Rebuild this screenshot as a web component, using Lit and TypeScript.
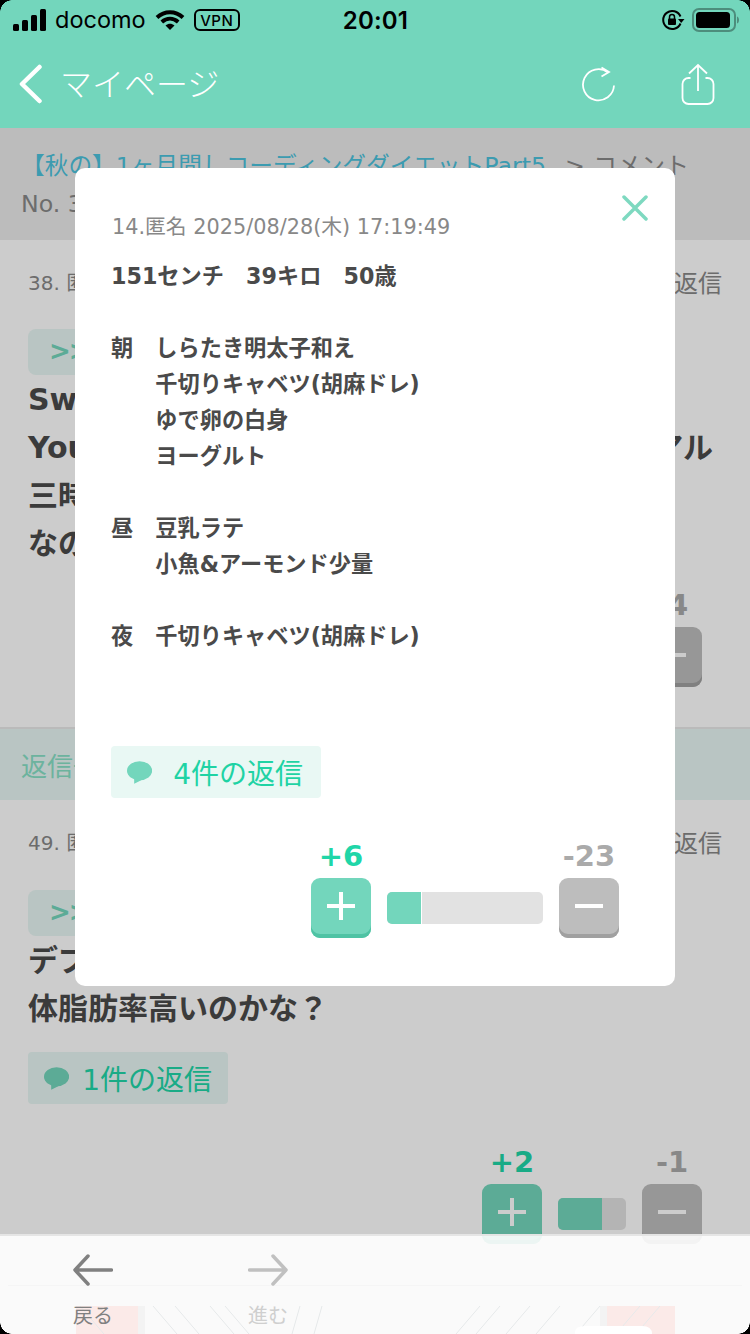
import { LitElement, html, css, svg } from "lit";
import { customElement } from "lit/decorators.js";

const score = (plus: string, minus: string, barW: number, fill: number) => html`
  <div class="score">
    <div class="count up">${plus}</div><div></div><div class="count down">${minus}</div>
    <div class="btn p"><svg width="28" height="28" viewBox="0 0 28 28"><path d="M0 14H28M14 0V28" stroke="#fff" stroke-width="4"/></svg></div>
    <div class="bar" style="width:${barW}px"><i style="width:${fill}px"></i></div>
    <div class="btn m"><svg width="28" height="28" viewBox="0 0 28 28"><path d="M0 14H28" stroke="#fff" stroke-width="4"/></svg></div>
  </div>`;

const bubble = html`<svg class="bubble" width="28" height="25" viewBox="0 0 28 25"><ellipse cx="14" cy="10.5" rx="14" ry="10.5" fill="#73d6bc"/><path d="M8 18V25L18 20Z" fill="#73d6bc"/></svg>`;

const lines = (angle: number, xs: number[]) =>
  xs.map((x) => svg`<path d="M${x} 0L${x + angle} 28" stroke="#e6e9ea" stroke-width="1" fill="none"/>`);

@customElement("app-root")
export class AppRoot extends LitElement {
  static styles = css`
    :host { display: block; width: 750px; height: 1334px; }
    * { box-sizing: border-box; }
    .screen { position: relative; width: 750px; height: 1334px; overflow: hidden; background: #fff;
      font-family: "DejaVu Sans", "Noto Sans CJK JP", sans-serif; color: #4a4a4a; }
    .top { background: #73d6bc; height: 128px; display: flex; flex-direction: column; }
    .status { height: 40px; display: grid; grid-template-columns: 1fr auto 1fr; align-items: center; color: #000;
      font-family: Inter, "Liberation Sans", sans-serif; }
    .st-l { display: flex; align-items: center; padding-left: 13px; }
    .carrier { font-size: 23.5px; margin: 0 9px 0 9px; line-height: 40px; }
    .vpn { border: 2px solid #000; border-radius: 6px; width: 46px; height: 22px; font-size: 15px; font-weight: 500; letter-spacing: .5px;
      display: flex; align-items: center; justify-content: center; margin-left: 9px; }
    .time { font-size: 24px; font-weight: 600; letter-spacing: .2px; margin-left: 1px; }
    .st-r { display: flex; justify-content: flex-end; align-items: center; gap: 7px; padding-right: 11px; }
    .nav { flex: 1; display: flex; align-items: center; padding: 0 35px 0 18px; color: #fff; }
    .nav .ttl { font-family: "Noto Sans CJK JP", sans-serif; font-weight: 300; font-size: 32px; margin-left: 16px; flex: 1; line-height: 36px; padding-bottom: 4px; }
    .nav .refresh { margin-right: 65px; }
    .crumb { background: #ececec; height: 112px; padding: 19px 21px 0; font-size: 23.7px; line-height: 38px; color: #888; white-space: nowrap; overflow: hidden; }
    .crumb a { color: #4cc2dc; }
    .crumb .sep { margin: 0 8px 0 19px; }
    .crumb .cm { font-size: 24px; }
    .post { padding: 23px 28px 0; position: relative; }
    .p1 { height: 489px; border-bottom: 2px solid #e9e9e9; }
    .p2 { height: 434px; }
    .head { display: flex; justify-content: space-between; align-items: center; height: 36px; font-size: 20px; color: #888; }
    .head span:last-child { font-size: 24px; }
    .anchor { margin-top: 30px; width: 200px; height: 46px; padding: 0 21px; border-radius: 8px; background: #e8f7f4; color: #73d6bc; font-weight: bold; font-size: 26px; letter-spacing: -2px; line-height: 44px; }
    .p2 .anchor { margin-top: 31px; }
    .text { font-weight: bold; font-size: 30px; line-height: 48px; white-space: pre; margin: 1px 0 0; word-spacing: 2px; }
    .replyband { height: 71px; background: #e8f7f4; color: #87e0c6; font-size: 26px; padding: 0 21px; line-height: 76px; }
    .chip { display: flex; align-items: center; background: #e8f7f4; color: #20d6a8; font-size: 28px; height: 52px; border-radius: 4px; white-space: nowrap; }
    .p2 .chip { margin-top: 19px; padding: 0 16px; gap: 13px; width: 200px; }
    .score-wrap { display: flex; justify-content: flex-end; margin-top: 20px; }
    .post .score-wrap { padding-right: 20px; }
    .p2 .score-wrap { margin-top: 41px; }
    .score { display: grid; grid-template-columns: 60px auto 60px; column-gap: 16px; row-gap: 5px; }
    .count { font-weight: bold; font-size: 29px; line-height: 34px; text-align: center; white-space: nowrap; }
    .up { color: #20d6a8; }
    .down { color: #aaa; }
    .btn { width: 60px; height: 60px; border-radius: 9px; display: flex; align-items: center; justify-content: center; padding-bottom: 4px; }
    .btn.p { background: #73d6bc; box-shadow: inset 0 -4px 0 #4fc3a4; }
    .btn.m { background: #bdbdbd; box-shadow: inset 0 -4px 0 #a0a0a0; }
    .bar { height: 32px; margin-top: 14px; background: #e2e2e2; border-radius: 5px; overflow: hidden; }
    .bar i { display: block; height: 100%; background: #73d6bc; }
    .modal .bar i { border-right: 1px solid #fff; }
    .dim { position: absolute; left: 0; right: 0; top: 128px; bottom: 0; background: rgba(0, 0, 0, .2); }
    .modal { position: absolute; left: 75px; top: 168px; width: 600px; height: 818px; background: #fff; border-radius: 10px; padding: 42px 56px 0 36px; display: flex; flex-direction: column; }
    .close { position: absolute; left: 547px; top: 27px; }
    .meta { font-size: 20.8px; line-height: 34px; color: #888; margin-left: 1px; }
    .body { margin-top: 14px; font-size: 22.2px; line-height: 36px; font-weight: bold; white-space: pre; color: #4a4a4a; }
    .modal .chip { margin-top: 92px; padding: 0 18px 0 16px; gap: 21px; width: 210px; background: #e9f8f4; color: #1fd3a4; }
    .modal .score-wrap { margin-top: 41px; }
    .tabbar { position: absolute; left: 0; right: 0; bottom: 0; height: 100px; background: rgba(255, 255, 255, .9); border-top: 2px solid rgba(226, 226, 226, .9); display: flex; padding-left: 73px; gap: 135px; }
    .ad { position: absolute; left: 0; top: 70px; }
    .rule { position: absolute; left: 8px; right: 8px; top: 49px; height: 1px; background: #f5f5f5; }
    .tab { position: relative; width: 40px; padding-top: 18px; display: flex; flex-direction: column; align-items: center; font-size: 20px; line-height: 28px; gap: 16px; white-space: nowrap; }
    .tab.on { color: #808080; }
    .tab.off { color: #cfcfcf; }
    .corner { position: absolute; width: 12px; height: 12px; }
    .tl { left: 0; top: 0; background: radial-gradient(circle at 100% 100%, transparent 11.5px, #000 12px); }
    .tr { right: 0; top: 0; background: radial-gradient(circle at 0 100%, transparent 11.5px, #000 12px); }
    .bl { left: 0; bottom: 0; background: radial-gradient(circle at 100% 0, transparent 11.5px, #000 12px); }
    .br { right: 0; bottom: 0; background: radial-gradient(circle at 0 0, transparent 11.5px, #000 12px); }
  `;

  render() {
    return html`<div class="screen">
      <div class="top">
        <div class="status">
          <div class="st-l">
            <svg width="33" height="22" viewBox="0 0 33 22"><rect x="0" y="15" width="6" height="7" rx="1.5"/><rect x="9" y="11" width="6" height="11" rx="1.5"/><rect x="18" y="6" width="6" height="16" rx="1.5"/><rect x="27" y="0" width="6" height="22" rx="1.5"/></svg>
            <span class="carrier">docomo</span>
            <svg width="30" height="22" viewBox="0 0 30 22"><path d="M2 8.5C9.500 1.500 20.500 1.500 28 8.500M6.800 13C11.800 8.700 18.200 8.700 23.200 13" fill="none" stroke="#000" stroke-width="4"/><path d="M10.500 16.500C13.500 14 16.500 14 19.500 16.500L15 21Z"/></svg>
            <span class="vpn">VPN</span>
          </div>
          <div class="time">20:01</div>
          <div class="st-r">
            <svg width="24" height="22" viewBox="0 0 24 22"><path d="M19.500 7.500A9 9 0 1 0 19.500 14.500" fill="none" stroke="#000" stroke-width="2"/><path d="M17 10H23.500L20.200 14Z"/><rect x="7" y="9.500" width="8" height="6.500" rx="1"/><path d="M8.500 10V8A2.500 2.500 0 0 1 13.500 8V10" fill="none" stroke="#000" stroke-width="1.500"/></svg>
            <svg width="47" height="24" viewBox="0 0 47 24"><rect x="1" y="1" width="42" height="22" rx="6" fill="none" stroke="#4d8d7c" stroke-width="2"/><rect x="4" y="4" width="34" height="16" rx="3.500"/><path d="M45 8.500C46.500 9 47 10.500 47 12S46.500 15 45 15.500Z" fill="#4d8d7c"/></svg>
          </div>
        </div>
        <div class="nav">
          <svg width="26" height="40" viewBox="0 0 26 40"><path d="M21.500 3L4 20L21.500 37" fill="none" stroke="#fff" stroke-width="4.500" stroke-linecap="round" stroke-linejoin="round"/></svg>
          <div class="ttl">マイページ</div>
          <svg class="refresh" width="34" height="36" viewBox="0 0 34 36"><path d="M32 19.500A15.500 15.500 0 1 1 26 6.500" fill="none" stroke="#fff" stroke-width="1.800"/><path d="M19.500 1.500L27 6L19.500 10.500" fill="none" stroke="#fff" stroke-width="1.800"/></svg>
          <svg width="34" height="42" viewBox="0 0 34 42"><path d="M9.500 15H7.500A6 6 0 0 0 1.500 21V35A6 6 0 0 0 7.500 41H26.500A6 6 0 0 0 32.500 35V21A6 6 0 0 0 26.500 15H24.500M17 28V2M8 10.500L17 2L26 10.500" fill="none" stroke="#fff" stroke-width="1.800"/></svg>
        </div>
      </div>

      <div class="crumb"><a>【秋の】1ヶ月間しコーディングダイエットPart5</a><span class="sep">&gt;</span><span class="cm">コメント</span><br />No. 38</div>

      <div class="post p1">
        <div class="head"><span>38. 匿名</span><span>返信</span></div>
        <div class="anchor">&gt;&gt;14</div>
        <div class="text">Sweets
You  のおすすめ動画を見ながら毎日のマニュアル
三時のおやつ
なので</div>
        <div class="score-wrap">${score("+8", "-4", 68, 44)}</div>
      </div>
      <div class="replyband">返信一覧</div>
      <div class="post p2">
        <div class="head"><span>49. 匿名</span><span>返信</span></div>
        <div class="anchor">&gt;&gt;14</div>
        <div class="text">デブ
体脂肪率高いのかな？</div>
        <div class="chip">${bubble}<span>1件の返信</span></div>
        <div class="score-wrap">${score("+2", "-1", 68, 44)}</div>
      </div>

      <div class="dim"></div>

      <div class="modal">
        <svg class="close" width="26" height="26" viewBox="0 0 26 26"><path d="M2 2L24 24M24 2L2 24" stroke="#7ed9c0" stroke-width="3.500" stroke-linecap="round"/></svg>
        <div class="meta">14.匿名 2025/08/28(木) 17:19:49</div>
        <div class="body">151センチ　39キロ　50歳

朝　しらたき明太子和え
　　千切りキャベツ(胡麻ドレ)
　　ゆで卵の白身
　　ヨーグルト

昼　豆乳ラテ
　　小魚&amp;アーモンド少量

夜　千切りキャベツ(胡麻ドレ)</div>
        <div class="chip">${bubble}<span>4件の返信</span></div>
        <div class="score-wrap">${score("+6", "-23", 156, 35)}</div>
      </div>

      <div class="tabbar">
        <svg class="ad" width="750" height="28" viewBox="0 0 750 28">
          <rect x="76" width="62" height="28" fill="#fbeae8"/><rect x="138" width="7" height="28" fill="#f3f3f3"/>
          <rect x="607" width="68" height="28" fill="#fbeae8"/><rect x="600" width="7" height="28" fill="#f3f3f3"/>
          ${lines(24, [80, 153, 175, 210, 225])}${lines(-8, [300, 322])}${lines(-24, [480, 500, 530, 560, 600, 640, 660])}
          <path d="M575 28V26Q575 20 585 20H642Q652 20 652 28Z" fill="#fff"/>
        </svg>
        <div class="rule"></div>
        <div class="tab on">
          <svg width="40" height="32" viewBox="0 0 40 32"><path d="M38.500 16H2M15 2L2 16L15 30" fill="none" stroke="#808080" stroke-width="3.500" stroke-linecap="round" stroke-linejoin="round"/></svg>
          <span>戻る</span>
        </div>
        <div class="tab off">
          <svg width="40" height="32" viewBox="0 0 40 32"><path d="M1.500 16H38M25 2L38 16L25 30" fill="none" stroke="#c0c0c0" stroke-width="3.500" stroke-linecap="round" stroke-linejoin="round"/></svg>
          <span>進む</span>
        </div>
      </div>

      <div class="corner tl"></div><div class="corner tr"></div><div class="corner bl"></div><div class="corner br"></div>
    </div>`;
  }
}
